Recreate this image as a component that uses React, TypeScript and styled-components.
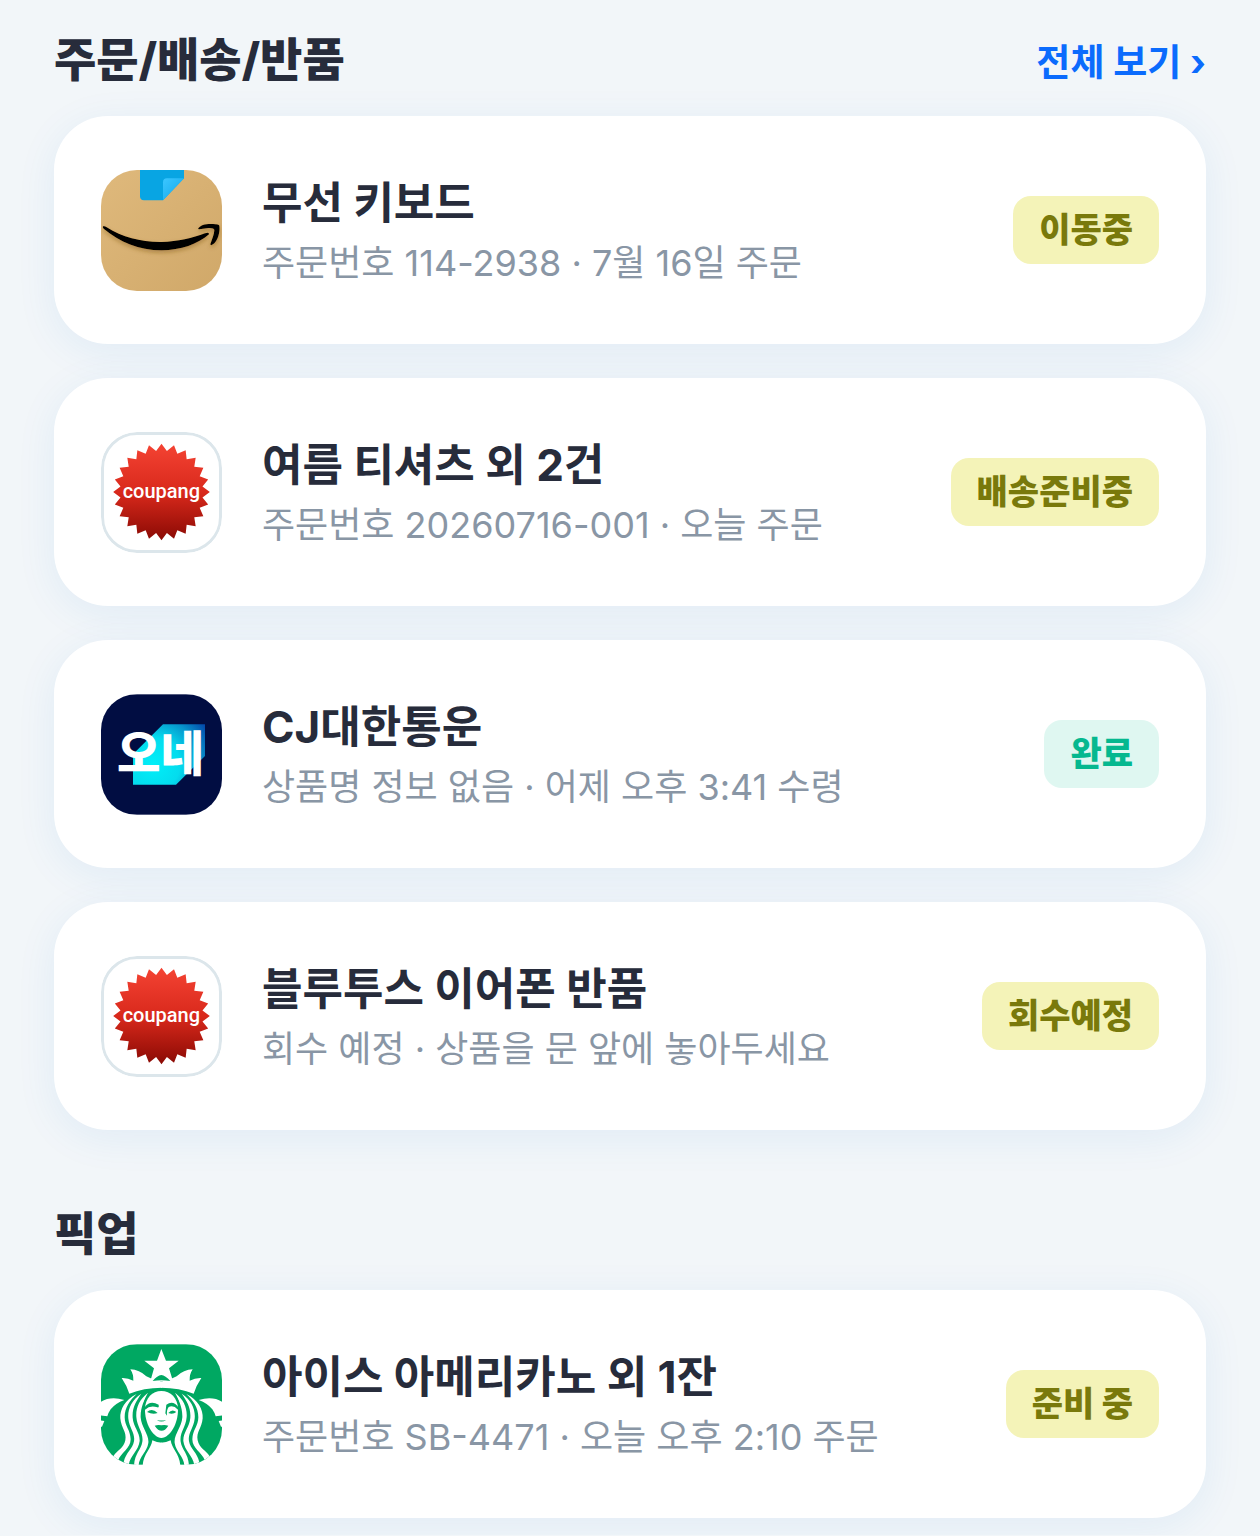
import styled, { createGlobalStyle } from "styled-components";

const GlobalStyle = createGlobalStyle`
  * {
    box-sizing: border-box;
  }

  body {
    margin: 0;
    background-color: #f2f6f9;
    font-family: Inter, "Noto Sans CJK KR", sans-serif;
    color: #272c3b;
  }
`;

const Page = styled.main`
  padding: 29px 54px 17px;
  overflow: hidden;
`;

const Section = styled.section`
  margin-bottom: 73px;

  &:last-child {
    margin-bottom: 0;
  }
`;

const SectionHeader = styled.header`
  display: flex;
  justify-content: space-between;
  align-items: baseline;
  margin-bottom: 27px;
`;

const SectionTitle = styled.h2`
  margin: 0;
  font-size: 46px;
  line-height: 60px;
  font-weight: 800;
`;

const MoreLink = styled.a`
  color: #0b6bfd;
  font-size: 37px;
  line-height: 48px;
  font-weight: 700;
  text-decoration: none;
`;

const CardList = styled.ul`
  display: flex;
  flex-direction: column;
  gap: 34px;
  margin: 0;
  padding: 0;
  list-style: none;
`;

const Card = styled.li`
  display: flex;
  align-items: center;
  gap: 40px;
  min-height: 228px;
  padding: 36px 47px;
  border-radius: 54px;
  background-color: white;
  box-shadow: 0 8px 40px rgba(30, 120, 210, 0.08);
`;

const AppIcon = styled.div<{ $outlined?: boolean }>`
  position: relative;
  flex: none;
  width: 121px;
  height: 121px;
  border-radius: 36px;
  overflow: hidden;

  svg {
    display: block;
    width: 100%;
    height: 100%;
  }

  &::after {
    content: "";
    position: absolute;
    inset: 0;
    border: ${({ $outlined }) => ($outlined ? "3px solid #dce6eb" : "none")};
    border-radius: 36px;
  }
`;

const CardText = styled.div`
  flex: 1;
  min-width: 0;
  padding-top: 6px;
`;

const CardTitle = styled.h3`
  margin: 0;
  font-size: 44px;
  line-height: 60px;
  font-weight: 700;
`;

const CardMeta = styled.p`
  margin: 0;
  color: #8996a5;
  font-size: 36px;
  line-height: 60px;
`;

const tones = {
  progress: { background: "#f4f3b8", color: "#79790b" },
  done: { background: "#dff7f1", color: "#05b88f" },
};

const Badge = styled.span<{ $tone: keyof typeof tones }>`
  flex: none;
  padding: 10px 26px;
  border-radius: 18px;
  background-color: ${({ $tone }) => tones[$tone].background};
  color: ${({ $tone }) => tones[$tone].color};
  font-size: 34px;
  line-height: 48px;
  font-weight: 800;
`;

function AmazonLogo() {
  return (
    <svg viewBox="33 26 363 363" role="img" aria-label="Amazon">
      <defs>
        <linearGradient id="box" x1="0" y1="0" x2="1" y2="1">
          <stop offset="0" stopColor="#dfb97c" />
          <stop offset="1" stopColor="#d0a869" />
        </linearGradient>
        <linearGradient id="fold" x1="0" y1="0" x2="1" y2="1">
          <stop offset="0" stopColor="#3cc6ff" />
          <stop offset="0.6" stopColor="#22b4f2" />
        </linearGradient>
        <filter id="smileShadow" x="-10%" y="-30%" width="120%" height="180%">
          <feDropShadow dx="0" dy="7" stdDeviation="6" floodColor="#7a5518" floodOpacity="0.45" />
        </filter>
      </defs>
      <rect x="33" y="26" width="363" height="363" fill="url(#box)" />
      <path d="M150 20H282V51L219 117H162Q150 117 150 105Z" fill="#08a5e3" />
      <path d="M219 117V63Q219 51 231 51H282Z" fill="url(#fold)" />
      <g filter="url(#smileShadow)">
        <path d="M39 195Q44 193 50 198C98 228 154 243 215 242C264 241 308 230 345 216Q358 211 357 219C324 248 272 267 215 267C146 266 90 242 41 202Q37 197 39 195Z" />
        <path d="M324 203C330 190 350 187 369 188Q387 188 388 193C391 212 383 239 369 249Q362 254 361 249C366 233 373 219 373 206Q372 199 355 200L328 204Z" />
      </g>
    </svg>
  );
}

// 24 tips, radii alternate between the tip and the notch
const sealPoints = Array.from({ length: 48 }, (_, i) => {
  const radius = i % 2 === 0 ? 145 : 124;
  const angle = (i * Math.PI) / 24;
  return `${214.5 + radius * Math.sin(angle)},${213 - radius * Math.cos(angle)}`;
}).join(" ");

function CoupangLogo() {
  return (
    <svg viewBox="33 33 363 363" role="img" aria-label="Coupang">
      <defs>
        <linearGradient id="seal" x1="0" y1="0" x2="0" y2="1">
          <stop offset="0" stopColor="#f44333" />
          <stop offset="0.5" stopColor="#d9291c" />
          <stop offset="1" stopColor="#8a0a04" />
        </linearGradient>
      </defs>
      <rect x="33" y="33" width="363" height="363" fill="white" />
      <polygon points={sealPoints} fill="url(#seal)" />
      <text
        x="214"
        y="230"
        textAnchor="middle"
        fontFamily="Roboto, sans-serif"
        fontSize="60"
        fontWeight="500"
        fill="white"
      >
        coupang
      </text>
    </svg>
  );
}

function OneLogo() {
  return (
    <svg viewBox="33 30 363 361" role="img" aria-label="CJ대한통운 오네">
      <defs>
        <radialGradient id="ribbon" gradientUnits="userSpaceOnUse" cx="190" cy="240" r="200">
          <stop offset="0" stopColor="#00eff8" />
          <stop offset="0.4" stopColor="#04dcee" />
          <stop offset="0.7" stopColor="#0796cc" />
          <stop offset="1" stopColor="#033fa6" />
        </radialGradient>
      </defs>
      <rect x="33" y="30" width="363" height="361" fill="#010d42" />
      <path d="M219 120H345V215L258 301H129V210Z" fill="url(#ribbon)" />
      <text
        x="81"
        y="260"
        fontFamily="'Noto Sans CJK KR', sans-serif"
        fontSize="142"
        fontWeight="900"
        fill="white"
      >
        오네
      </text>
    </svg>
  );
}

function SirenHalf() {
  return (
    <g>
      <path d="M216 142L182 132L169 126Q148 106 121 105Q131 120 130 139Q113 130 95 131Q110 153 118 178Q160 160 216 160Z" fill="white" />
      <path d="M30 204Q60 184 103 197Q76 207 62 225Q55 235 52 246L30 243Z" fill="white" />
      <path d="M30 258L43 260L36 277H30Z" fill="white" />
      <path d="M140 179C105 196 89 226 91 252C93 281 111 292 106 318C101 343 82 347 70 366L84 379C94 353 122 343 122 315C121 286 104 275 104 249C104 220 119 199 140 179Z" fill="white" />
      <path d="M154 178C124 197 112 226 115 253C118 282 136 295 132 321C128 345 107 354 101 384L116 393C120 363 146 349 149 320C150 293 130 278 128 250C126 220 138 201 154 178Z" fill="white" />
      <path d="M174 175C148 195 137 221 139 248C141 278 161 295 157 322C153 348 134 356 132 394H146C146 369 171 353 175 326C178 301 154 279 152 249C151 219 163 196 174 175Z" fill="white" />
      <path d="M187 318C184 344 160 358 158 394H216V325Q200 325 187 318Z" fill="white" />
    </g>
  );
}

function StarbucksLogo() {
  return (
    <svg viewBox="33 30 363 361" role="img" aria-label="Starbucks">
      <rect x="33" y="30" width="363" height="361" fill="#00a862" />
      <SirenHalf />
      <g transform="translate(429 0) scale(-1 1)">
        <SirenHalf />
      </g>
      <path d="M214 44L228 79H266L237 102L249 141H181L192 102L163 79H201Z" fill="white" />
      <path d="M188 140Q202 124 214 122Q226 124 241 140Q214 136 188 140Z" fill="#00a862" />
      <path d="M214 164C247 164 270 188 270 225C270 274 246 316 214 318C183 316 159 274 159 225C159 188 182 164 214 164Z" fill="#00a862" />
      <path d="M214 170C242 170 263 191 264 223C265 268 240 309 214 311C189 309 164 268 165 223C166 191 187 170 214 170Z" fill="white" />
      <g fill="#00a862">
        <path d="M163 220Q179 196 206 211Q208 221 202 219Q181 211 165 226Z" />
        <path d="M266 220Q250 196 229 211L226 237L231 244Q229 227 236 218Q250 211 264 226Z" />
        <path d="M171 233Q186 220 203 236Q188 242 171 233Z" />
        <path d="M235 236Q246 222 259 233Q249 241 235 236Z" />
        <path d="M200 256Q214 267 229 256Q214 261 200 256Z" />
        <path d="M194 274Q204 270 214 273Q224 270 235 274Q215 305 194 274Z" />
      </g>
    </svg>
  );
}

type Item = {
  logo: React.ReactNode;
  outlined?: boolean;
  title: string;
  meta: string;
  status: string;
  tone: keyof typeof tones;
};

const orders: Item[] = [
  {
    logo: <AmazonLogo />,
    title: "무선 키보드",
    meta: "주문번호 114-2938 · 7월 16일 주문",
    status: "이동중",
    tone: "progress",
  },
  {
    logo: <CoupangLogo />,
    outlined: true,
    title: "여름 티셔츠 외 2건",
    meta: "주문번호 20260716-001 · 오늘 주문",
    status: "배송준비중",
    tone: "progress",
  },
  {
    logo: <OneLogo />,
    title: "CJ대한통운",
    meta: "상품명 정보 없음 · 어제 오후 3:41 수령",
    status: "완료",
    tone: "done",
  },
  {
    logo: <CoupangLogo />,
    outlined: true,
    title: "블루투스 이어폰 반품",
    meta: "회수 예정 · 상품을 문 앞에 놓아두세요",
    status: "회수예정",
    tone: "progress",
  },
];

const pickups: Item[] = [
  {
    logo: <StarbucksLogo />,
    title: "아이스 아메리카노 외 1잔",
    meta: "주문번호 SB-4471 · 오늘 오후 2:10 주문",
    status: "준비 중",
    tone: "progress",
  },
];

function Cards({ items }: { items: Item[] }) {
  return (
    <CardList>
      {items.map((item) => (
        <Card key={item.title}>
          <AppIcon $outlined={item.outlined}>{item.logo}</AppIcon>
          <CardText>
            <CardTitle>{item.title}</CardTitle>
            <CardMeta>{item.meta}</CardMeta>
          </CardText>
          <Badge $tone={item.tone}>{item.status}</Badge>
        </Card>
      ))}
    </CardList>
  );
}

function App() {
  return (
    <>
      <GlobalStyle />
      <Page lang="ko">
        <Section>
          <SectionHeader>
            <SectionTitle>주문/배송/반품</SectionTitle>
            <MoreLink href="#orders">전체 보기 ›</MoreLink>
          </SectionHeader>
          <Cards items={orders} />
        </Section>
        <Section>
          <SectionHeader>
            <SectionTitle>픽업</SectionTitle>
          </SectionHeader>
          <Cards items={pickups} />
        </Section>
      </Page>
    </>
  );
}

export default App;
